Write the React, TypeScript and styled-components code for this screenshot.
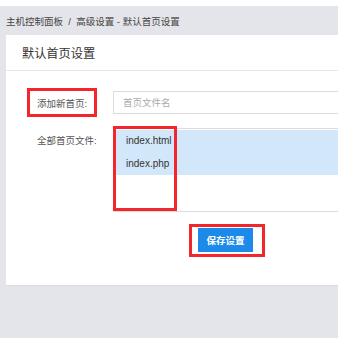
import * as React from "react";
import styled, { createGlobalStyle } from "styled-components";

const GlobalStyle = createGlobalStyle`
	html, body {
		margin: 0;
		padding: 0;
		background: #e4e5ea;
		overflow: hidden;
	}
	body {
		font-family: "Liberation Sans", "Noto Sans CJK SC", sans-serif;
	}
`;

const Page = styled.div`
	width: 338px;
	height: 338px;
	overflow: hidden;
	background: #e4e5ea;
`;

const TopStrip = styled.div`
	height: 6px;
	background: #ffffff;
`;

const Breadcrumb = styled.div`
	height: 29px;
	display: flex;
	align-items: center;
	padding-left: 6px;
	font-size: 9.5px;
	color: #444;
	white-space: nowrap;
`;

const Card = styled.div`
	margin: 0 -40px 0 6px;
	background: #ffffff;
	border-bottom: 1px solid #dcdde2;
`;

const CardHeader = styled.div`
	height: 35px;
	display: flex;
	align-items: center;
	padding-left: 16px;
	border-bottom: 1px solid #e8e8ec;
	font-size: 12.2px;
	color: #333;
`;

const CardBody = styled.div`
	padding: 17px 20px 28px 21px;
`;

const FormRow = styled.div<{ $top?: boolean }>`
	display: flex;
	align-items: ${p => (p.$top ? "flex-start" : "center")};
	margin-bottom: ${p => (p.$top ? "12px" : "9px")};
`;

const LabelCell = styled.div`
	width: 86px;
	flex: none;
`;

const Label = styled.div`
	margin-top: 4px;
	padding-left: 10px;
	font-size: 9.5px;
	color: #555;
	line-height: 22px;
`;

const Highlight = styled.div`
	border: 3px solid #f2262b;
	box-sizing: border-box;
`;

const LabelMark = styled(Highlight)`
	width: 70px;
	height: 29px;
	display: flex;
	align-items: center;
	padding-left: 7px;
	font-size: 9.5px;
	color: #555;
`;

const TextInput = styled.input`
	flex: 1;
	height: 23px;
	box-sizing: border-box;
	border: 1px solid #dcdcdc;
	padding: 0 9px;
	font-family: inherit;
	font-size: 9.5px;
	color: #333;
	outline: none;
	&::placeholder {
		color: #aaa;
	}
`;

const ListWrap = styled.div`
	flex: 1;
	position: relative;
	padding-top: 2px;
`;

const List = styled.div`
	height: 84px;
	box-sizing: border-box;
	border: 1px solid #dcdcdc;
	padding-top: 1px;
`;

const Option = styled.div<{ $selected?: boolean }>`
	height: 22.5px;
	line-height: 22.5px;
	padding-left: 12px;
	font-size: 10px;
	color: #333;
	background: ${p => (p.$selected ? "#d3e7fa" : "transparent")};
`;

const ListMark = styled(Highlight)`
	position: absolute;
	top: 0;
	left: 0;
	width: 64px;
	height: 85px;
`;

const ButtonRow = styled.div`
	display: flex;
	padding-left: 162px;
`;

const ButtonMark = styled(Highlight)`
	width: 76px;
	height: 33px;
	padding: 1px 9px 2px 6px;
`;

const SaveButton = styled.button`
	width: 55px;
	height: 24px;
	border: none;
	background: #1b8ae9;
	color: #fff;
	font-family: inherit;
	font-size: 9.5px;
	font-weight: bold;
	padding: 0;
	cursor: pointer;
`;

const files = ["index.html", "index.php"];

export default function App() {
	return (
		<Page>
			<GlobalStyle />
			<TopStrip />
			<Breadcrumb>主机控制面板&nbsp;&nbsp;/&nbsp;&nbsp;高级设置 - 默认首页设置</Breadcrumb>
			<Card>
				<CardHeader>默认首页设置</CardHeader>
				<CardBody>
					<FormRow>
						<LabelCell>
							<LabelMark>添加新首页:</LabelMark>
						</LabelCell>
						<TextInput placeholder="首页文件名" />
					</FormRow>
					<FormRow $top>
						<LabelCell>
							<Label>全部首页文件:</Label>
						</LabelCell>
						<ListWrap>
							<List>
								{files.map(f => (
									<Option key={f} $selected>
										{f}
									</Option>
								))}
							</List>
							<ListMark />
						</ListWrap>
					</FormRow>
					<ButtonRow>
						<ButtonMark>
							<SaveButton>保存设置</SaveButton>
						</ButtonMark>
					</ButtonRow>
				</CardBody>
			</Card>
		</Page>
	);
}
